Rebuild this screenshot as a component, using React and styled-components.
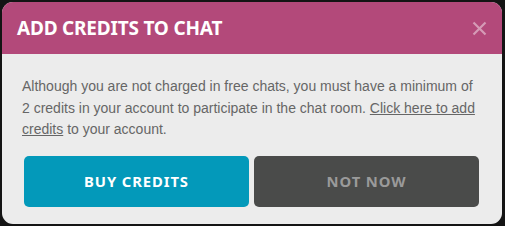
import React from "react"
import styled, { createGlobalStyle } from "styled-components"

const Global = createGlobalStyle`
  html, body {
    margin: 0;
    padding: 0;
    background: #141414;
  }
  body {
    padding: 2px;
    width: 505px;
    height: 226px;
    box-sizing: border-box;
    overflow: hidden;
  }
`

const Modal = styled.div`
  width: 500px;
  height: 222px;
  border-radius: 11px;
  overflow: hidden;
  background: #ececec;
  display: flex;
  flex-direction: column;
`

const Header = styled.div`
  height: 52px;
  background: #b3497a;
  display: flex;
  align-items: center;
  justify-content: space-between;
  padding: 0 15px 0 15px;
  box-sizing: border-box;
`

const Title = styled.h2`
  margin: 0;
  font-family: "Noto Sans", sans-serif;
  font-weight: 700;
  font-size: 19px;
  color: #ffffff;
  letter-spacing: -0.2px;
`

const Close = styled.button`
  border: 0;
  background: none;
  padding: 0;
  width: 15px;
  height: 15px;
  display: flex;
  cursor: pointer;
  svg {
    stroke: rgba(255, 255, 255, 0.45);
  }
`

const Body = styled.div`
  padding: 22px 24px 17px 20px;
  display: flex;
  flex-direction: column;
  gap: 15px;
`

const Text = styled.p`
  margin: 0;
  font-family: "Liberation Sans", Arial, sans-serif;
  font-size: 14px;
  line-height: 21.6px;
  color: #666666;
  a {
    color: #666666;
    text-decoration: underline;
  }
`

const Actions = styled.div`
  display: flex;
  gap: 5px;
  padding: 0 0 0 2px;
  margin-right: -1px;
`

const Button = styled.button`
  flex: 1;
  height: 51px;
  border: 0;
  border-radius: 5px;
  background: ${p => (p.$primary ? "#0399ba" : "#4a4b4a")};
  color: ${p => (p.$primary ? "#ffffff" : "#9a9a9a")};
  font-family: "Noto Sans", sans-serif;
  font-weight: 700;
  font-size: 14.8px;
  letter-spacing: 0.9px;
  cursor: pointer;
`

export default function App() {
  return (
    <>
      <Global />
      <Modal>
        <Header>
          <Title>ADD CREDITS TO CHAT</Title>
          <Close aria-label="close">
            <svg width="15" height="15" viewBox="0 0 15 15" fill="none" strokeWidth="2.2">
              <path d="M1.5 1.5 L13.5 13.5 M13.5 1.5 L1.5 13.5" />
            </svg>
          </Close>
        </Header>
        <Body>
          <Text>
            Although you are not charged in free chats, you must have a minimum of 2 credits in
            your account to participate in the chat room. <a href="#">Click here to add credits</a>{" "}
            to your account.
          </Text>
          <Actions>
            <Button $primary>BUY CREDITS</Button>
            <Button>NOT NOW</Button>
          </Actions>
        </Body>
      </Modal>
    </>
  )
}
